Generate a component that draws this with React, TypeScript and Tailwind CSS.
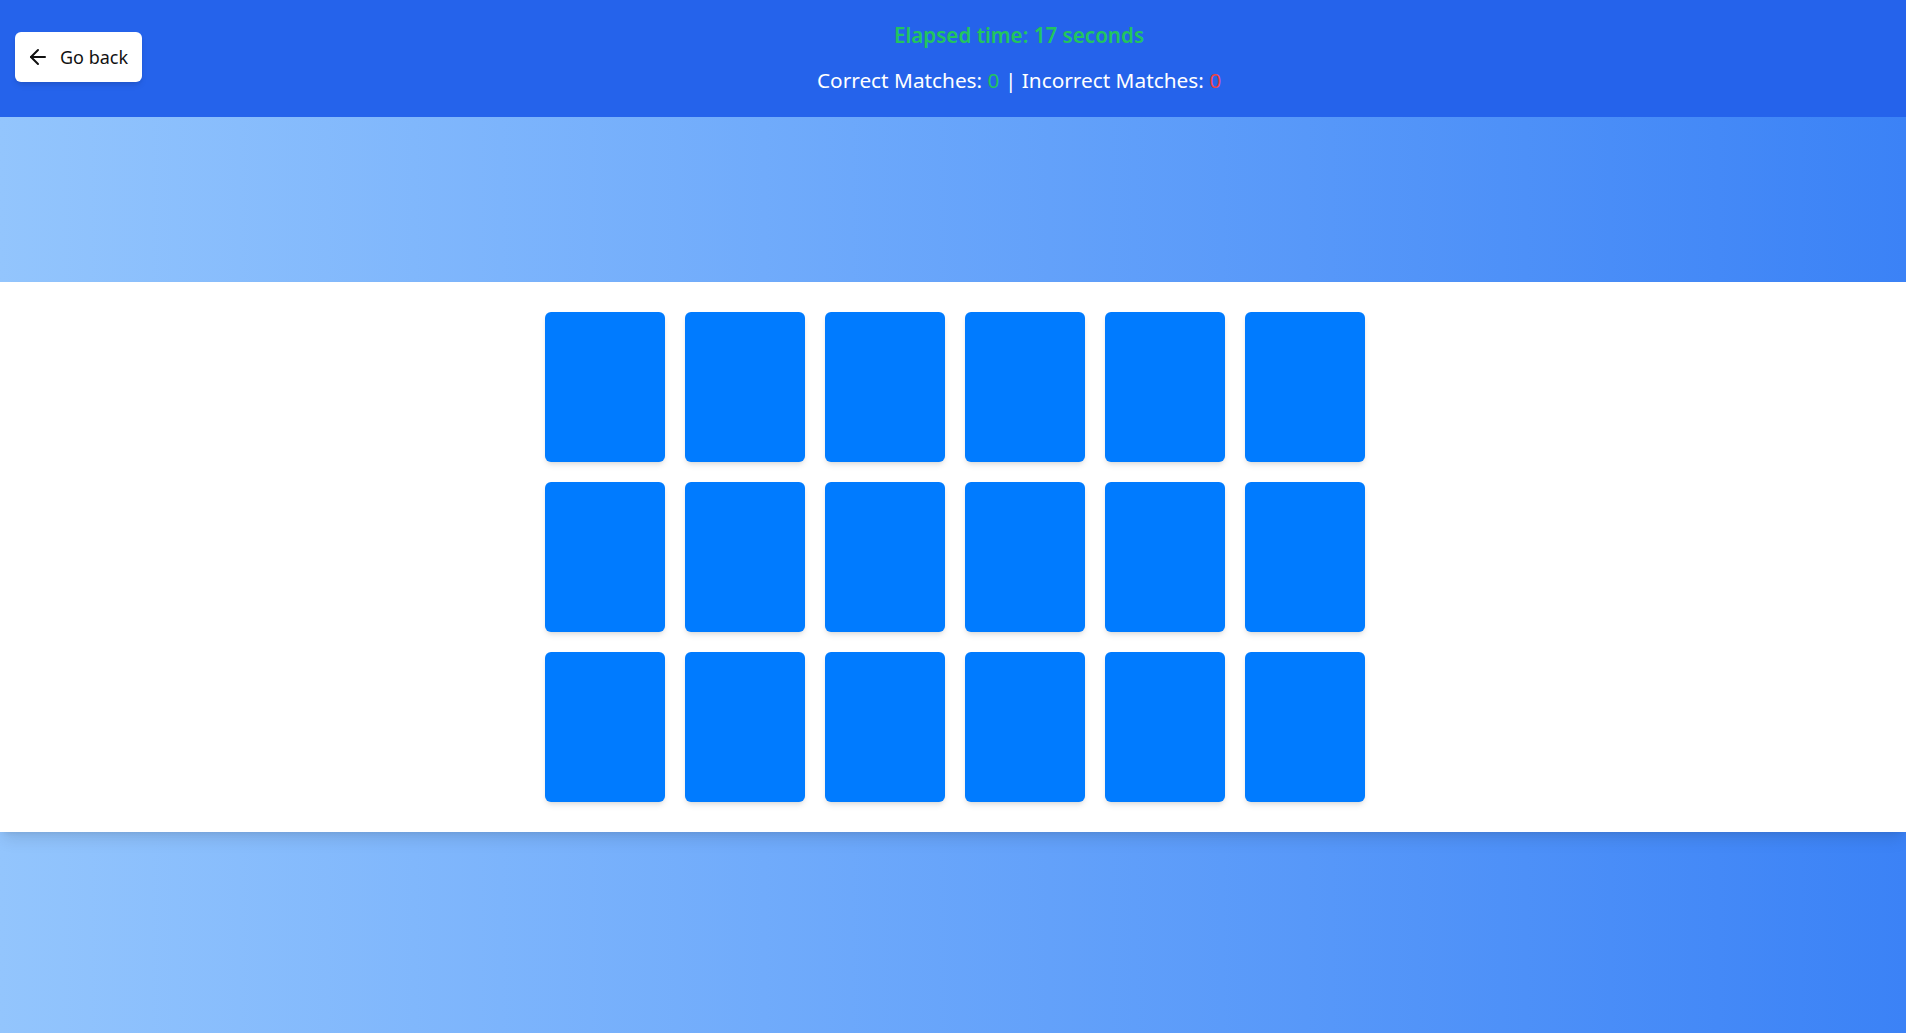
import { ArrowLeft } from "lucide-react";

const cards = Array.from({ length: 18 }, (_, i) => i);

const App = () => {
    return (
        <div className="min-h-screen bg-gradient-to-r from-[#93c5fd] to-[#3b82f6] font-['Noto_Sans',sans-serif]">
            <header className="flex items-center h-[117px] px-[15px] bg-[#2563eb]">
                <button className="flex items-center gap-[10px] h-[50px] w-[127px] -mt-[3px] pl-[11px] bg-white rounded-md shadow-md text-[18px] text-[#111]">
                    <ArrowLeft className="w-[24px] h-[24px]" strokeWidth={2} />
                    Go back
                </button>
                <div className="flex-1 flex flex-col items-center ml-[5px] -mt-[3px]">
                    <p className="text-[20.6px] leading-[24px] font-semibold text-[#22c55e]">
                        Elapsed time: 17 seconds
                    </p>
                    <p className="mt-[21px] text-[20.8px] leading-[24px] text-white">
                        Correct Matches: <span className="text-[#22c55e]">0</span> |
                        Incorrect Matches: <span className="text-[#ef4444]">0</span>
                    </p>
                </div>
            </header>

            <div className="pt-[165px]">
                <div className="bg-white shadow-lg py-[30px] pl-[4px]">
                    <div className="grid grid-cols-[repeat(6,120px)] gap-[20px] justify-center">
                        {cards.map(i => (
                            <div
                                key={i}
                                className="h-[150px] rounded-md bg-[#007bff] shadow-md"
                            ></div>
                        ))}
                    </div>
                </div>
            </div>
        </div>
    );
};

export default App;
